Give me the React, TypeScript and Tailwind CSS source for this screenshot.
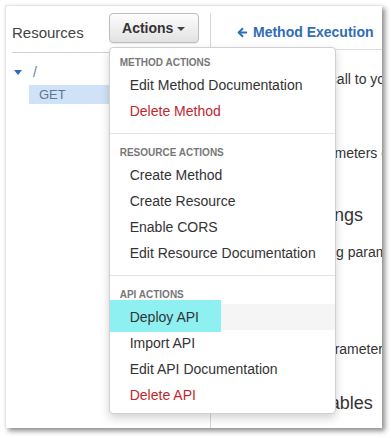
import { ArrowLeft } from "lucide-react";

const font = { fontFamily: '"Liberation Sans", Arial, sans-serif' };

type Item = { label: string; danger?: boolean; active?: boolean };
type Section = { title: string; items: Item[] };

const sections: Section[] = [
  {
    title: "Method Actions",
    items: [{ label: "Edit Method Documentation" }, { label: "Delete Method", danger: true }],
  },
  {
    title: "Resource Actions",
    items: [
      { label: "Create Method" },
      { label: "Create Resource" },
      { label: "Enable CORS" },
      { label: "Edit Resource Documentation" },
    ],
  },
  {
    title: "API Actions",
    items: [
      { label: "Deploy API", active: true },
      { label: "Import API" },
      { label: "Edit API Documentation" },
      { label: "Delete API", danger: true },
    ],
  },
];

function ActionsMenu() {
  return (
    <div className="absolute left-0 top-[34px] z-10 w-[227px] rounded border border-[#d0d0d0] bg-white py-[5px] shadow-[0_4px_10px_rgba(0,0,0,0.18)]">
      {sections.map((section, i) => (
        <div key={section.title}>
          {i > 0 && <div className="my-[9px] h-px bg-[#e3e3e3]" />}
          <div className="whitespace-nowrap px-[10px] pt-[3px] pb-[2px] text-[10px] leading-[14px] font-bold uppercase text-[#777]">
            {section.title}
          </div>
          {section.items.map((item) => (
            <div
              key={item.label}
              className={`relative whitespace-nowrap px-[20px] py-[3px] text-[14px] leading-[20px] ${
                item.active ? "bg-[#f5f5f5] text-[#333]" : item.danger ? "text-[#c0272d]" : "text-[#333]"
              }`}
            >
              {/* cyan marker drawn over the hovered entry */}
              {item.active && (
                <span className="absolute left-0 top-[-4px] h-[32px] w-[111px] bg-[#8ff0f2]" />
              )}
              <span className="relative">{item.label}</span>
            </div>
          ))}
        </div>
      ))}
    </div>
  );
}

export default function App() {
  return (
    <div className="h-[438px] w-[391px] bg-white pt-[5px] pl-[5px]" style={font}>
      <div className="flex h-[423px] w-[377px] overflow-hidden border-t border-l border-[#e4e4e4] bg-white shadow-[3px_3px_5px_rgba(0,0,0,0.45)]">
        {/* Resources tree */}
        <div className="mt-[7px] w-[205px] shrink-0 border-r border-[#d6d6d6]">
          <div className="ml-[6px] flex h-[40px] items-start border-b border-[#cfcfcf]">
            <span className="mt-[11px] text-[15px] leading-[18px] text-[#444]">Resources</span>
            <div className="relative ml-[25px]">
              <button className="flex h-[30px] w-[90px] items-center justify-center gap-[4px] rounded border border-[#bdbdbd] bg-gradient-to-b from-[#fdfdfd] to-[#e2e2e2] text-[14px] font-bold text-[#333] shadow-[0_1px_1px_rgba(0,0,0,0.08)]">
                Actions
                <span className="mt-[1px] h-0 w-0 border-x-[4px] border-t-[4px] border-x-transparent border-t-[#444]" />
              </button>
              <ActionsMenu />
            </div>
          </div>
          <div className="mt-[11px] ml-[8px] flex h-[16px] items-center">
            <span className="h-0 w-0 border-x-[4px] border-t-[5px] border-x-transparent border-t-[#2f6db5]" />
            <span className="ml-[11px] text-[14px] text-[#5f7fa6]">/</span>
          </div>
          <div className="mt-[5px] ml-[23px] h-[19px] bg-[#cfe2f8] pl-[10px] text-[13px] leading-[19px] text-[#5f7590]">
            GET
          </div>
        </div>

        {/* Method execution panel */}
        <div className="mt-[7px] min-w-0 flex-1 overflow-hidden">
          <div className="flex h-[37px] items-center border-b border-[#dcdcdc] pl-[25px] pt-[3px] text-[14px] font-bold text-[#2f6db5]">
            <ArrowLeft size={13} strokeWidth={3.5} className="mr-[4px]" />
            Method Execution
          </div>
          <div className="whitespace-nowrap pl-[20px] text-[14px] text-[#333]">
            <p className="mt-[19px] leading-[20px]">Send a method call to your API</p>
            <p className="mt-[54px] leading-[20px]">Set up path parameters explicitly</p>
            <p className="mt-[40px] ml-[-4px] text-[18px] leading-[24px]">Caching Settings</p>
            <p className="mt-[15px] leading-[20px]">Pass the following parameters</p>
            <p className="mt-[77px] ml-[-3px] leading-[20px]">Cached query parameters</p>
            <p className="mt-[32px] ml-[16px] text-[18px] leading-[24px]">Stage Variables</p>
          </div>
        </div>
      </div>
    </div>
  );
}
